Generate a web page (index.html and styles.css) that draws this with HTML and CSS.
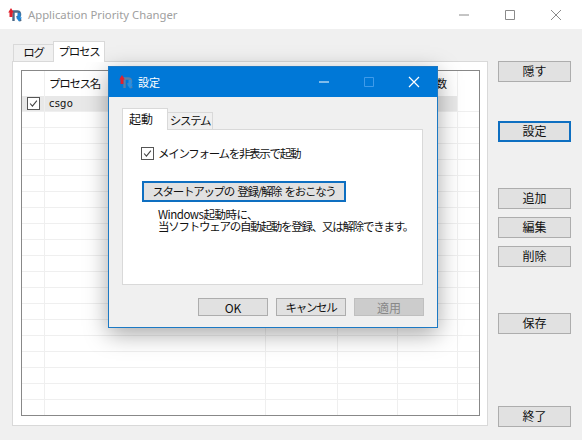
FILE: index.html
```html
<!DOCTYPE html>
<html lang="ja">
<head>
<meta charset="utf-8">
<title>Application Priority Changer</title>
<link rel="stylesheet" href="styles.css">
</head>
<body>
<div class="app">
  <header class="titlebar">
    <svg class="logo" viewBox="0 0 14 14"><path d="M5.500 13V3.500h3.700a2.800 2.800 0 0 1 .8 5.500L12.800 13" fill="none" stroke="#4d6a88" stroke-width="2.400"/><path d="M3 0 5.800 4.500H4.500V9h-3V4.500H.2z" fill="#e2202c"/><path d="M11 13.500 8 9.500h1.500V5h3v4.500H14z" fill="#1f86d8"/></svg>
    <span class="app-title">Application Priority Changer</span>
    <div class="win-controls dim">
      <svg viewBox="0 0 12 12"><path d="M1 6h10" stroke="#8a8a8a"/></svg>
      <svg viewBox="0 0 12 12"><path d="M1.500 1.500h9v9h-9z" fill="none" stroke="#8a8a8a"/></svg>
      <svg viewBox="0 0 12 12"><path d="M1 1l10 10M11 1 1 11" stroke="#8a8a8a"/></svg>
    </div>
  </header>
  <main class="content">
    <section class="main-tabs">
      <div class="tabstrip">
        <div class="tab tab-log">ログ</div>
        <div class="tab tab-proc active">プロセス</div>
      </div>
      <div class="panel">
        <div class="grid">
          <div class="grid-row grid-head">
            <div class="c0"></div><div class="c1">プロセス名</div><div class="c2"></div><div class="c3"></div><div class="c4">変更回数</div><div class="c5"></div>
          </div>
          <div class="grid-row grid-selected">
            <div class="c0"><span class="check"><svg viewBox="0 0 13 13"><path d="M2.500 6.500 5.200 9.500 10.500 3" fill="none" stroke="#444" stroke-width="1.300"/></svg></span></div><div class="c1">csgo</div><div class="c2"></div><div class="c3"></div><div class="c4"></div><div class="c5"></div>
          </div>
          <div class="grid-fill"></div>
        </div>
      </div>
    </section>
    <aside class="side">
      <button class="btn b-hide">隠す</button>
      <button class="btn focus b-settings">設定</button>
      <button class="btn b-add">追加</button>
      <button class="btn b-next">編集</button>
      <button class="btn b-next">削除</button>
      <button class="btn b-save">保存</button>
      <button class="btn b-exit">終了</button>
    </aside>
  </main>

  <div class="dialog">
    <header class="dlg-title">
      <svg class="logo" viewBox="0 0 14 14"><path d="M5.500 13V3.500h3.700a2.800 2.800 0 0 1 .8 5.500L12.800 13" fill="none" stroke="#5b7fa5" stroke-width="2.400"/><path d="M3 0 5.800 4.500H4.500V9h-3V4.500H.2z" fill="#e2202c"/><path d="M11 13.500 8 9.500h1.500V5h3v4.500H14z" fill="#2b8fe0"/></svg>
      <span class="dlg-name">設定</span>
      <div class="win-controls">
        <svg viewBox="0 0 12 12"><path d="M1 6h10" stroke="#fff"/></svg>
        <svg viewBox="0 0 12 12"><path d="M1.500 1.500h9v9h-9z" fill="none" stroke="#3f9bea"/></svg>
        <svg viewBox="0 0 12 12"><path d="M1 1l10 10M11 1 1 11" stroke="#fff" stroke-width="1.200"/></svg>
      </div>
    </header>
    <div class="dlg-body">
      <div class="tabstrip dlg-tabs">
        <div class="tab tab-start active">起動</div>
        <div class="tab tab-sys">システム</div>
      </div>
      <div class="dlg-panel">
        <label class="opt"><span class="check"><svg viewBox="0 0 13 13"><path d="M2.500 6.500 5.200 9.500 10.500 3" fill="none" stroke="#444" stroke-width="1.300"/></svg></span>メインフォームを非表示で起動</label>
        <button class="btn focus startup">スタートアップの 登録/解除 をおこなう</button>
        <p class="note"><span class="note-first">Windows起動時に、</span><br>当ソフトウェアの自動起動を登録、又は解除できます。</p>
      </div>
      <div class="dlg-actions">
        <button class="btn wide">OK</button>
        <button class="btn">キャンセル</button>
        <button class="btn wide disabled">適用</button>
      </div>
    </div>
  </div>
</div>
</body>
</html>
```
FILE: styles.css
```css
* { box-sizing: border-box; }
html, body { margin: 0; padding: 0; }
body {
  width: 582px;
  height: 440px;
  overflow: hidden;
  font: 11.500px/16px "Noto Sans CJK JP", "Liberation Sans", sans-serif;
  letter-spacing: -1.300px;
  color: #111;
  background: #f0f0f0;
}
.app { position: relative; width: 582px; height: 440px; }

.titlebar { height: 29px; background: #fff; display: flex; align-items: center; padding-left: 8px; }
.logo { width: 14px; height: 14px; flex: none; }
.app-title { margin-left: 6px; color: #a0a0a0; font: 11.300px "Noto Sans", sans-serif; letter-spacing: 0; }
.win-controls { margin-left: auto; display: flex; }
.win-controls svg { width: 12px; height: 12px; margin: 0 17px; display: block; }
.titlebar .win-controls { margin-right: 3px; }

.content { display: flex; height: 411px; padding: 12px 11px 0 12px; }
.main-tabs { width: 476px; }
.tabstrip { display: flex; align-items: flex-end; height: 20px; padding-left: 1px; }
.tab {
  height: 17px;
  padding: 0;
  border: 1px solid #d9d9d9;
  border-bottom: 0;
  background: #f0f0f0;
  line-height: 15px;
  text-align: center;
}
.tab.active { height: 21px; background: #fff; margin-bottom: -1px; position: relative; z-index: 1; line-height: 18px; }
.tab-log { width: 41px; }
.tab-proc { width: 52px; margin-left: -1px; }
.panel { height: 365px; background: #fff; border: 1px solid #d9d9d9; padding: 8px 7px 8px 8px; }

.grid { height: 346px; border: 1px solid #888; display: flex; flex-direction: column; background: #fff; }
.grid-row { display: flex; flex: none; }
.grid-head { height: 25px; }
.grid-head > div { height: 25px; line-height: 24px; }
.grid-head > div:not(.c5), .grid-selected > div:not(.c5) { border-right: 1px solid #efefef; }
.grid-selected { height: 16px; background: #e8e8e8; border-bottom: 1px solid #efefef; font: 10px/16px "DejaVu Sans", sans-serif; letter-spacing: .2px; }
.c0 { width: 23px; display: flex; align-items: center; justify-content: center; }
.c1 { width: 221px; padding-left: 4px; }
.c2 { width: 72px; }
.c3 { width: 60px; }
.c4 { width: 60px; padding-left: 5px; white-space: nowrap; letter-spacing: 0; font-size: 11px; }
.c5 { flex: 1; background: #fff; }
.grid-fill {
  flex: 1;
  background-color: #fff;
  background-image:
    linear-gradient(#efefef, #efefef),
    linear-gradient(#efefef, #efefef),
    linear-gradient(#efefef, #efefef),
    linear-gradient(#efefef, #efefef),
    linear-gradient(#efefef, #efefef),
    repeating-linear-gradient(to bottom, transparent 0 15px, #efefef 15px 16px);
  background-size: 1px 100%, 1px 100%, 1px 100%, 1px 100%, 1px 100%, 100% 100%;
  background-position: 22px 0, 243px 0, 315px 0, 375px 0, 435px 0, 0 0;
  background-repeat: no-repeat;
}

.check { width: 13px; height: 13px; border: 1px solid #555; background: #fff; display: block; flex: none; }
.check svg { display: block; width: 11px; height: 11px; }

.side { margin: 20px 0 0 10px; width: 73px; display: flex; flex-direction: column; }
.btn {
  display: block;
  width: 73px;
  height: 21px;
  padding: 0 0 2px;
  font: inherit;
  letter-spacing: inherit;
  color: #111;
  background: #e1e1e1;
  border: 1px solid #adadad;
}
.side .btn, .btn.wide { font-size: 12px; letter-spacing: 0; }
.btn.focus { border: 2px solid #0e6fc1; }
.btn.disabled { background: #cccccc; border-color: #bfbfbf; color: #888; }
.b-settings { margin-top: 39px; }
.b-add { margin-top: 46px; }
.b-next { margin-top: 8px; }
.b-save { margin-top: 46px; }
.b-exit { margin-top: 72px; }

.dialog {
  position: absolute;
  left: 108px;
  top: 66px;
  width: 330px;
  height: 262px;
  background: #f0f0f0;
  border: 1px solid #1c79c4;
  box-shadow: 0 6px 22px rgba(0, 0, 0, .35);
}
.dlg-title { height: 30px; background: #0078d7; color: #fff; display: flex; align-items: center; padding-left: 10px; }
.dlg-name { margin-left: 5px; font-size: 11px; letter-spacing: 0; }
.dlg-title .win-controls svg { margin: 0 16px 0 17px; }
.dlg-title .win-controls { margin-right: 1px; }
.dlg-body { padding: 11px 14px 0 13px; }
.dlg-tabs { height: 21px; padding-left: 0; }
.dlg-tabs .tab.active { height: 22px; line-height: 19px; }
.tab-start { width: 46px; text-align: left; padding-left: 6px; letter-spacing: 0; font-size: 12px; }
.tab-sys { width: 46px; margin-left: -1px; }
.dlg-panel { height: 156px; width: 301px; background: #fff; border: 1px solid #d9d9d9; padding: 16px 0 0 18px; }
.opt { display: flex; align-items: center; gap: 4px; height: 14px; }
.startup { width: 204px; margin: 21px 0 0 1px; white-space: nowrap; word-spacing: 2px; }
.note { margin: 6px 0 0 17px; line-height: 12px; white-space: nowrap; letter-spacing: -1.250px; }
.note-first { letter-spacing: -.5px; }
.dlg-actions { display: flex; gap: 8px; justify-content: flex-end; margin: 13px -1px 0 0; }
.dlg-actions .btn { width: 70px; height: 18px; line-height: 15px; padding: 0; }
```
